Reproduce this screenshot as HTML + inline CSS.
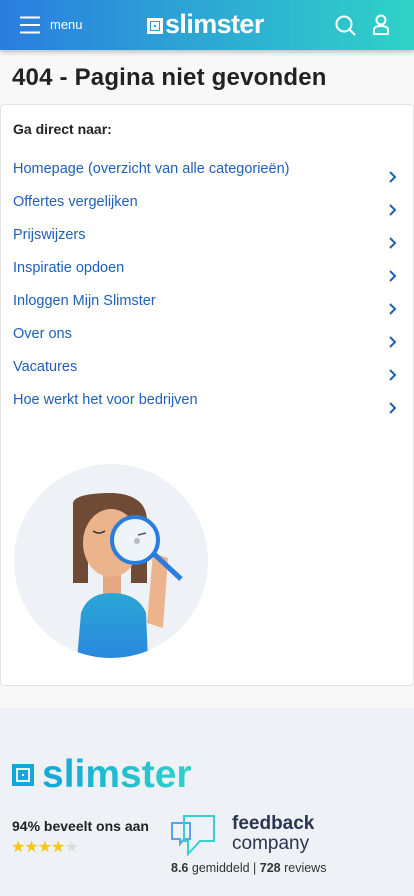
<!DOCTYPE html><html><head><meta charset="utf-8"><style>
body{margin:0;width:414px;height:896px;overflow:hidden;background:#f8f8f8;font-family:"Liberation Sans",sans-serif}
.hdr{position:absolute;top:0;left:0;width:414px;height:50px;background:linear-gradient(90deg,#2a7ddf,#2fd3c8);box-shadow:0 2px 5px rgba(0,0,0,.25)}
h1{position:absolute;top:64px;left:12px;margin:0;font-size:24px;font-weight:bold;color:#222;letter-spacing:.2px}
.card{position:absolute;top:104px;left:0;width:412px;height:580px;background:#fff;border:1px solid #e3e3e3;border-radius:4px}
.card b{position:absolute;left:12px;top:16px;font-size:14px;color:#222}
.ln{position:absolute;left:12px;font-size:14.5px;color:#1f5fb8}
.ch{position:absolute;left:386px}
.ft{position:absolute;top:708px;left:0;width:414px;height:188px;background:#eef1f5}
</style></head><body>
<div class="hdr">
<svg style="position:absolute;left:20px;top:16px" width="21" height="18"><path d="M0 1.5H20M0 9H20M0 16.5H20" stroke="#fff" stroke-width="2"/></svg>
<div style="position:absolute;left:50px;top:17px;color:#fff;font-size:13px">menu</div>
<svg style="position:absolute;left:147px;top:18px" width="16" height="16"><path d="M1.5 1.5H14.5V14.5H1.5Z M5.5 5.5H10.5V10.5H5.5Z" fill="none" stroke="#fff" stroke-width="3"/></svg>
<div style="position:absolute;left:165px;top:9px;color:#fff;font-size:27px;font-weight:bold;letter-spacing:-.6px">slimster</div>
<svg style="position:absolute;left:335px;top:15px" width="22" height="22"><circle cx="9" cy="9" r="7.5" fill="none" stroke="#fff" stroke-width="2"/><path d="M14.5 14.5L20 20" stroke="#fff" stroke-width="2"/></svg>
<svg style="position:absolute;left:372px;top:14px" width="18" height="22"><circle cx="9" cy="6" r="4.5" fill="none" stroke="#fff" stroke-width="2"/><path d="M2 20V16Q2 12 9 12Q16 12 16 16V20Z" fill="none" stroke="#fff" stroke-width="2"/></svg>
</div>
<h1>404 - Pagina niet gevonden</h1>
<div class="card"><b>Ga direct naar:</b>
<div class="ln" style="top:56px">Homepage (overzicht van alle categorieën)</div>
<div class="ln" style="top:89px">Offertes vergelijken</div>
<div class="ln" style="top:122px">Prijswijzers</div>
<div class="ln" style="top:155px">Inspiratie opdoen</div>
<div class="ln" style="top:188px">Inloggen Mijn Slimster</div>
<div class="ln" style="top:221px">Over ons</div>
<div class="ln" style="top:254px">Vacatures</div>
<div class="ln" style="top:287px">Hoe werkt het voor bedrijven</div>
<svg class="ch" style="top:66px" width="12" height="280" fill="none" stroke="#1f5fb8" stroke-width="2"><path d="M3 1L8 6L3 11M3 34L8 39L3 44M3 67L8 72L3 77M3 100L8 105L3 110M3 133L8 138L3 143M3 166L8 171L3 176M3 199L8 204L3 209M3 232L8 237L3 242"/></svg>
<svg style="position:absolute;left:12px;top:358px" width="196" height="196" viewBox="0 0 196 196">
<defs><clipPath id="c"><circle cx="98" cy="98" r="97"/></clipPath><linearGradient id="g" x1="0" y1="0" x2="0" y2="1"><stop offset="0" stop-color="#2aa6d6"/><stop offset="1" stop-color="#2a7ddf"/></linearGradient></defs>
<circle cx="98" cy="98" r="97" fill="#eef1f5"/>
<g clip-path="url(#c)">
<path d="M60 120V40Q62 30 100 30Q135 32 134 60V120H118V70H75V120Z" fill="#6f4a35"/>
<rect x="90" y="110" width="18" height="25" fill="#e6a882"/>
<ellipse cx="98" cy="80" rx="28" ry="34" fill="#ecb48c"/>
<path d="M62 220L68 150Q75 130 98 130Q125 130 133 150L136 220Z" fill="url(#g)"/>
<path d="M134 160L140 90L155 95L150 165Z" fill="#ecb48c"/>
</g>
<path d="M140 90L168 116" stroke="#2a7ddf" stroke-width="5"/>
<circle cx="122" cy="77" r="23" fill="#eef4fa" stroke="#2a7ddf" stroke-width="4"/>
<path d="M125 72L133 70" stroke="#555" stroke-width="1.5"/><circle cx="124" cy="78" r="3" fill="#bbb"/>
<path d="M80 68Q86 72 92 68" stroke="#333" stroke-width="1.5" fill="none"/>
</svg>
</div>
<div class="ft">
<svg style="position:absolute;left:12px;top:56px" width="22" height="22"><path d="M2 2H20V20H2Z M8 8H14V14H8Z" fill="none" stroke="#13a7db" stroke-width="4"/></svg>
<div style="position:absolute;left:42px;top:45px;font-size:39px;font-weight:bold;letter-spacing:0;background:linear-gradient(90deg,#13a7db,#2fd3c8);-webkit-background-clip:text;color:transparent">slimster</div>
<div style="position:absolute;left:12px;top:110px;font-size:14px;font-weight:bold;color:#222">94% beveelt ons aan</div>
<div style="position:absolute;left:11px;top:129px;font-size:16px;color:#f5c518;letter-spacing:-1px">★★★★<span style="color:#ddd">★</span></div>
<svg style="position:absolute;left:170px;top:105px" width="46" height="44" fill="none" stroke-width="2"><path d="M2 10H20V26H14L10 31V26H2Z" stroke="#5ba3e8"/><path d="M14 3H44V28H30L18 41V28H14Z" stroke="#35d0cf"/></svg>
<div style="position:absolute;left:232px;top:105px;font-size:19px;font-weight:bold;color:#2c3550">feedback</div>
<div style="position:absolute;left:232px;top:125px;font-size:19px;color:#2c3550">company</div>
<div style="position:absolute;left:171px;top:153px;font-size:12.5px;color:#333"><b>8.6</b> gemiddeld | <b>728</b> reviews</div>
</div>
</body></html>
